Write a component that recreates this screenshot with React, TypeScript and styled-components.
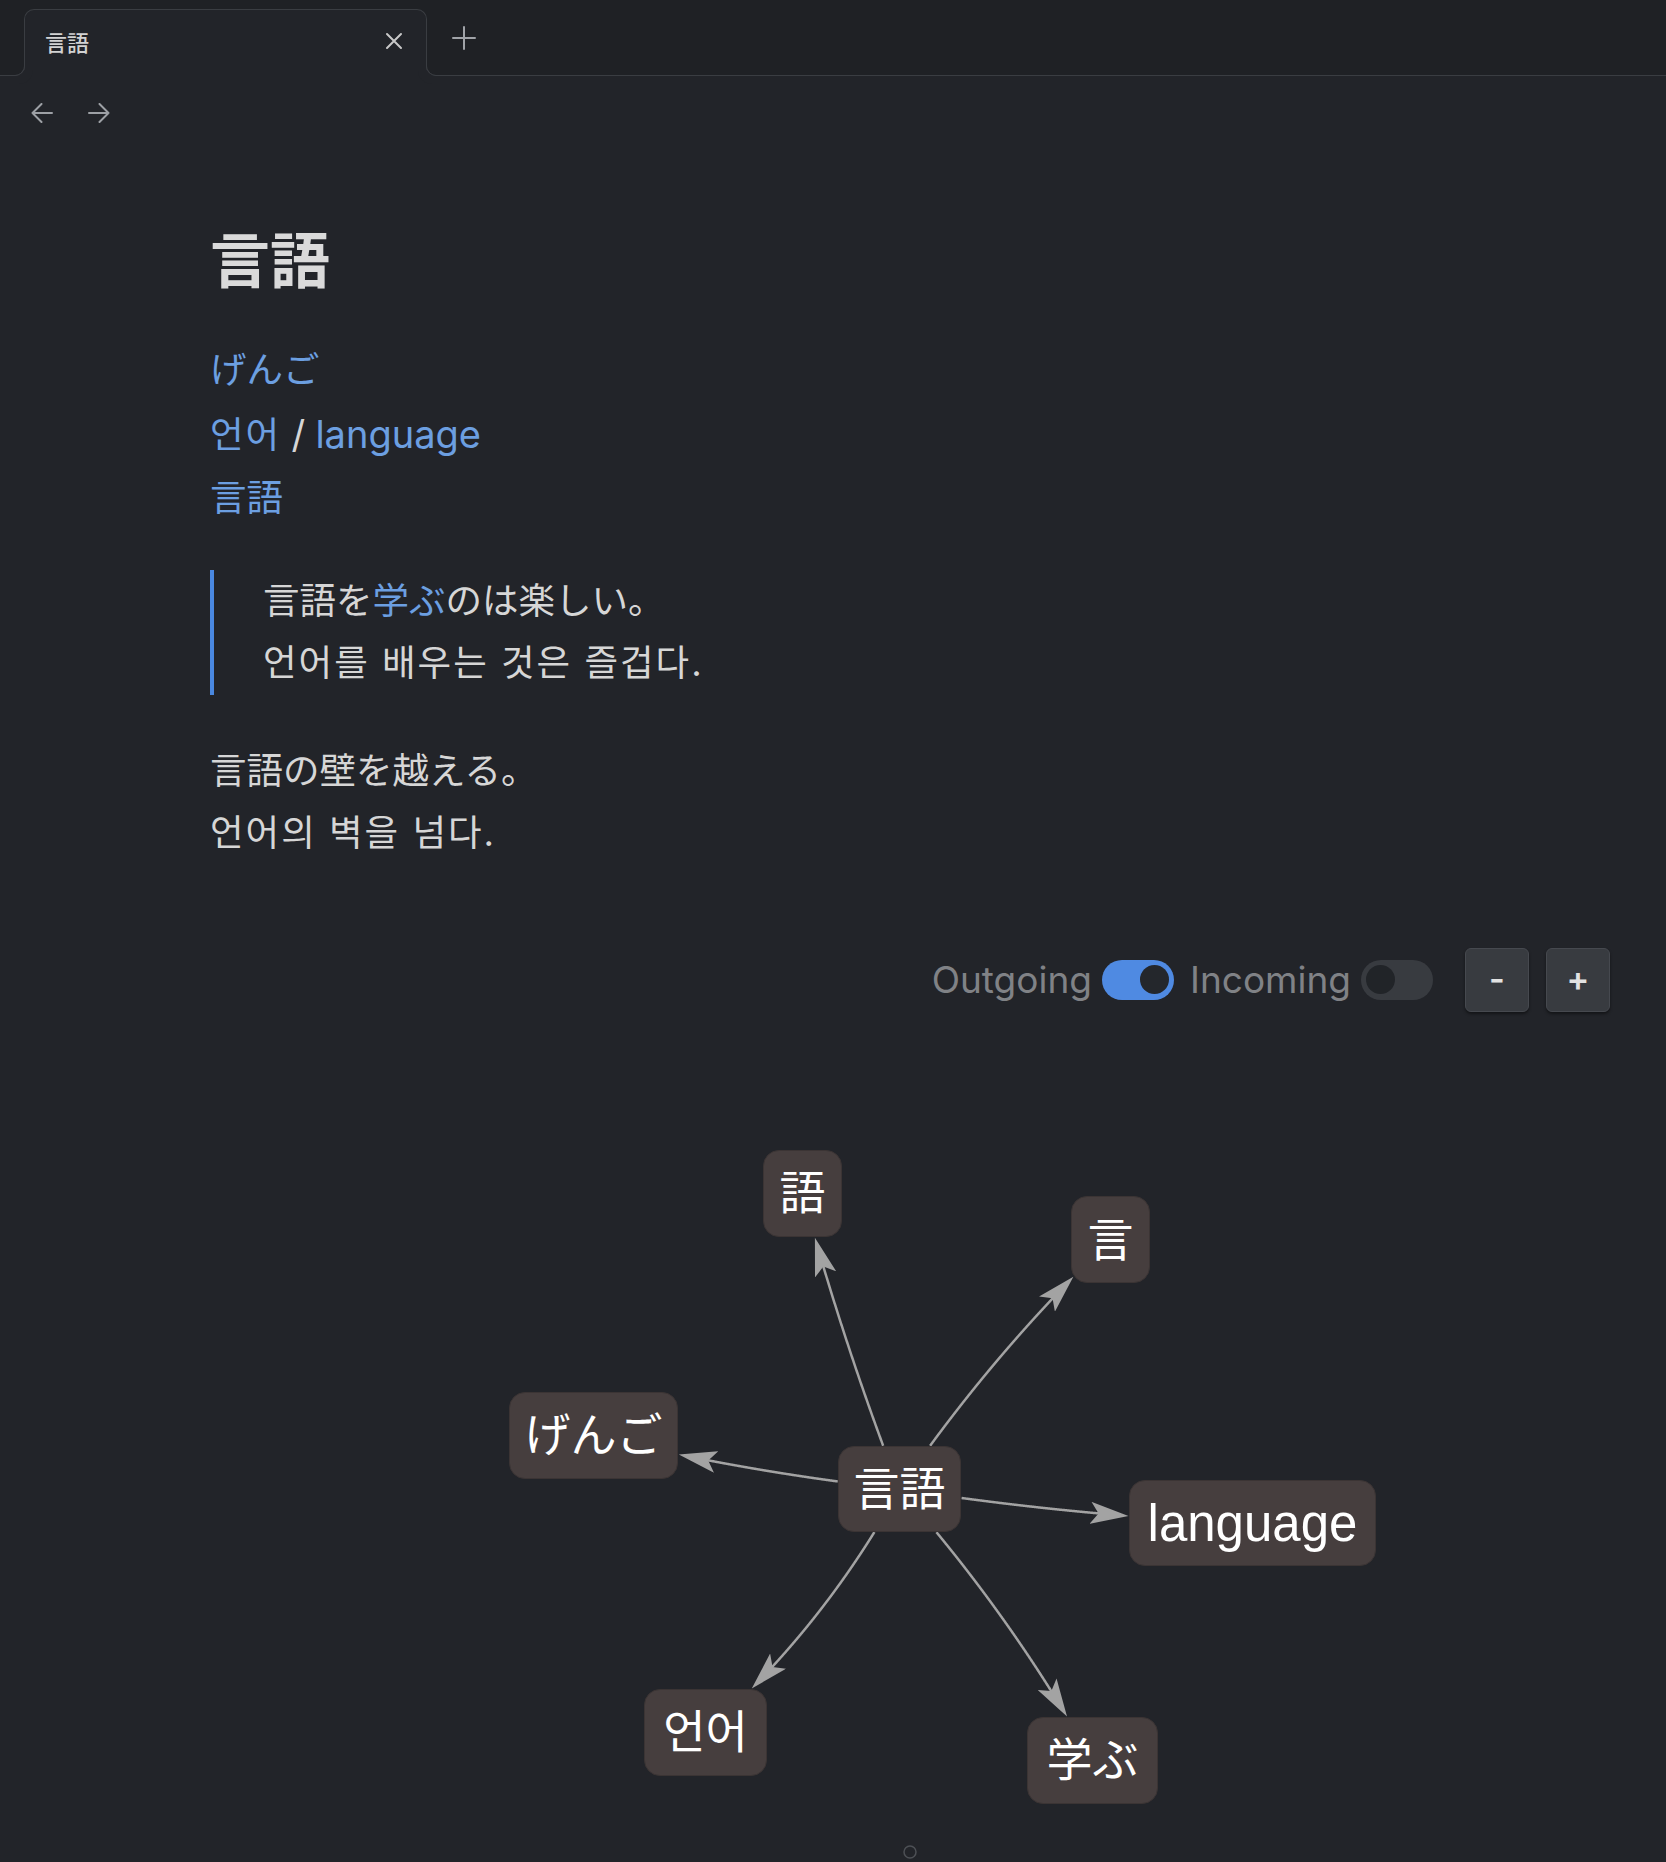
import React from "react";
import styled, { createGlobalStyle } from "styled-components";

const GlobalStyle = createGlobalStyle`
  html, body {
    margin: 0;
    padding: 0;
    height: 100%;
    overflow: hidden;
    background: #222429;
  }
  body {
    font-family: Inter, "Noto Sans CJK JP", sans-serif;
    color: #d6d6d6;
  }
  #root {
    height: 100%;
  }
`;

const LINE = "#3a3d42";
const PAGE_BG = "#222429";
const LINK = "#6c9fe1";
const EDGE = "#a3a3a3";

const Page = styled.div`
  width: 1666px;
  height: 1862px;
  background: ${PAGE_BG};
  display: flex;
  flex-direction: column;
`;

const TabStrip = styled.div`
  display: flex;
  align-items: flex-start;
  height: 66px;
  padding: 9px 0 0 24px;
  background: #1f2125;
  border-bottom: 1px solid ${LINE};
`;

const Tab = styled.div`
  position: relative;
  box-sizing: border-box;
  width: 403px;
  height: 67px;
  display: flex;
  align-items: center;
  justify-content: space-between;
  padding: 0 23px 4px 20px;
  background: ${PAGE_BG};
  border: 1px solid ${LINE};
  border-bottom: none;
  border-radius: 10px 10px 0 0;

  &::before,
  &::after {
    content: "";
    position: absolute;
    bottom: 0;
    width: 10px;
    height: 10px;
    border-bottom: 1px solid ${LINE};
  }
  &::before {
    left: -11px;
    border-right: 1px solid ${LINE};
    border-bottom-right-radius: 10px;
    box-shadow: 4px 4px 0 4px ${PAGE_BG};
  }
  &::after {
    right: -11px;
    border-left: 1px solid ${LINE};
    border-bottom-left-radius: 10px;
    box-shadow: -4px 4px 0 4px ${PAGE_BG};
  }
`;

const TabTitle = styled.span`
  font-family: "Noto Sans CJK JP", sans-serif;
  font-size: 22px;
  font-weight: 500;
  color: #d2d2d2;
`;

const IconButton = styled.span<{ $color?: string }>`
  display: flex;
  align-items: center;
  justify-content: center;
  color: ${(p) => p.$color || "#c8c8c8"};
`;

const NewTab = styled(IconButton)`
  margin: 17px 0 0 25px;
`;

const NavRow = styled.div`
  height: 47px;
  padding: 27px 0 0 31px;
  display: flex;
  align-items: flex-start;
  gap: 35px;
`;

const Main = styled.main`
  padding: 69px 0 0 210px;
`;

const Title = styled.h1`
  margin: 0;
  font-family: "Noto Sans CJK JP", sans-serif;
  font-size: 60px;
  font-weight: 700;
  line-height: 76px;
  color: #dadada;
`;

const Links = styled.div`
  margin-top: 44px;
  font-size: 36.5px;
  line-height: 63.5px;
`;

const Link = styled.a`
  color: ${LINK};
  text-decoration: none;
`;

// Korean runs are set a touch wider than the CJK fallback draws them
const Ko = styled.span`
  letter-spacing: 2px;
`;

const Latin = styled.span`
  font-size: 38px;
`;

const Quote = styled.blockquote`
  margin: 39px 0 0 0;
  padding-left: 49px;
  border-left: 4px solid #4a88e0;
  font-size: 36.5px;
  line-height: 62.5px;
  color: #d6d6d6;
`;

const Paragraph = styled.p`
  margin: 45px 0 0 0;
  font-size: 36.5px;
  line-height: 62.5px;
  color: #d6d6d6;
`;

const Controls = styled.div`
  margin-top: 83px;
  height: 64px;
  padding-right: 56px;
  display: flex;
  align-items: center;
  justify-content: flex-end;
`;

const ToggleLabel = styled.span`
  font-family: Inter, sans-serif;
  font-size: 37px;
  color: #808286;
  margin-right: 10px;
`;

const Toggle = styled.span<{ $on?: boolean }>`
  position: relative;
  width: 72px;
  height: 40px;
  border-radius: 20px;
  background: ${(p) => (p.$on ? "#4f8ae2" : "#383b40")};
  margin-right: ${(p) => (p.$on ? "16px" : "32px")};

  &::after {
    content: "";
    position: absolute;
    top: 5.5px;
    ${(p) => (p.$on ? "right: 5px;" : "left: 5px;")}
    width: 29px;
    height: 29px;
    border-radius: 50%;
    background: ${(p) => (p.$on ? "#24272c" : "#212428")};
  }
`;

const ZoomButton = styled.button<{ $gap?: number }>`
  box-sizing: border-box;
  width: 64px;
  height: 64px;
  margin-left: ${(p) => p.$gap ?? 0}px;
  display: flex;
  align-items: center;
  justify-content: center;
  padding: 0 0 2px 0;
  border: 1px solid #46494f;
  border-radius: 6px;
  background: #383b40;
  box-shadow: 0 2px 3px rgba(0, 0, 0, 0.45);
  font-family: Inter, sans-serif;
  font-size: 34px;
  font-weight: 600;
  color: #e2e2e2;
`;

const Canvas = styled.div`
  position: relative;
  flex: 1;
`;

const Edges = styled.svg`
  position: absolute;
  inset: 0;
  width: 100%;
  height: 100%;
`;

const Node = styled.div<{ $x: number; $y: number; $w: number; $h: number; $size?: number }>`
  position: absolute;
  box-sizing: border-box;
  left: ${(p) => p.$x - p.$w / 2}px;
  top: ${(p) => p.$y - p.$h / 2}px;
  width: ${(p) => p.$w}px;
  height: ${(p) => p.$h}px;
  display: flex;
  align-items: center;
  justify-content: center;
  background: #463e3e;
  border: 1.5px solid #3b3434;
  border-radius: 16px;
  font-family: "Liberation Sans", "Noto Sans CJK JP", sans-serif;
  font-size: ${(p) => p.$size ?? 46}px;
  line-height: 1;
  color: #ffffff;
  white-space: nowrap;
`;

type GNode = {
  id: string;
  label: string;
  x: number;
  y: number;
  w: number;
  h: number;
  size?: number;
  bend?: number;
};

const NODES: GNode[] = [
  { id: "center", label: "言語", x: 899.5, y: 477, w: 123, h: 86 },
  { id: "go", label: "語", x: 802.5, y: 181.5, w: 79, h: 87, bend: -8 },
  { id: "gen", label: "言", x: 1110.5, y: 228, w: 79, h: 87, bend: -17 },
  { id: "gengo", label: "げんご", x: 593.5, y: 423.5, w: 169, h: 87, bend: -10 },
  { id: "language", label: "language", x: 1252.5, y: 511.5, w: 247, h: 86, size: 51, bend: 10 },
  { id: "eoneo", label: "언어", x: 705.5, y: 720.5, w: 123, h: 87, bend: -27 },
  { id: "manabu", label: "学ぶ", x: 1092.5, y: 748.5, w: 131, h: 87, bend: -18 },
];

const RADIUS = 16;

const inside = (n: GNode, x: number, y: number) => {
  const ax = Math.abs(x - n.x);
  const ay = Math.abs(y - n.y);
  if (ax > n.w / 2 || ay > n.h / 2) return false;
  const cx = ax - (n.w / 2 - RADIUS);
  const cy = ay - (n.h / 2 - RADIUS);
  if (cx <= 0 || cy <= 0) return true;
  return cx * cx + cy * cy <= RADIUS * RADIUS;
};

// curved edge from the centre node, clipped at both boxes, ending short of the tip
const edges = NODES.slice(1).map((to) => {
  const from = NODES[0];
  const len = Math.hypot(to.x - from.x, to.y - from.y);
  const dx = (to.x - from.x) / len;
  const dy = (to.y - from.y) / len;
  const bend = to.bend ?? 0;
  const cx = (from.x + to.x) / 2 - dy * bend;
  const cy = (from.y + to.y) / 2 + dx * bend;
  const pts: [number, number][] = [];
  const steps = 600;
  for (let i = 0; i <= steps; i++) {
    const t = i / steps;
    const u = 1 - t;
    const x = u * u * from.x + 2 * u * t * cx + t * t * to.x;
    const y = u * u * from.y + 2 * u * t * cy + t * t * to.y;
    if (inside(from, x, y)) continue;
    if (inside(to, x, y)) break;
    pts.push([x, y]);
  }
  const tip = pts[pts.length - 1];
  while (pts.length > 2) {
    const p = pts[pts.length - 1];
    if (Math.hypot(tip[0] - p[0], tip[1] - p[1]) >= 10) break;
    pts.pop();
  }
  return { id: to.id, points: pts.map((p) => p.join(",")).join(" ") };
});

const ArrowLeft = () => (
  <svg width="22" height="20" viewBox="0 0 22 20" fill="none" stroke="#9da0a5" strokeWidth="2" strokeLinecap="round" strokeLinejoin="round">
    <path d="M10.5 1 L1.5 10 L10.5 19 M1.5 10 H21" />
  </svg>
);

const ArrowRight = () => (
  <svg width="22" height="20" viewBox="0 0 22 20" fill="none" stroke="#9da0a5" strokeWidth="2" strokeLinecap="round" strokeLinejoin="round">
    <path d="M11.5 1 L20.5 10 L11.5 19 M20.5 10 H1" />
  </svg>
);

export default function App() {
  return (
    <>
      <GlobalStyle />
      <Page>
        <TabStrip>
          <Tab>
            <TabTitle>言語</TabTitle>
            <IconButton>
              <svg width="18" height="18" viewBox="0 0 18 18" stroke="currentColor" strokeWidth="2" strokeLinecap="round">
                <path d="M2 2 L16 16 M16 2 L2 16" />
              </svg>
            </IconButton>
          </Tab>
          <NewTab $color="#a0a3a8">
            <svg width="24" height="24" viewBox="0 0 24 24" stroke="currentColor" strokeWidth="2" strokeLinecap="round">
              <path d="M12 1 V23 M1 12 H23" />
            </svg>
          </NewTab>
        </TabStrip>

        <NavRow>
          <ArrowLeft />
          <ArrowRight />
        </NavRow>

        <Main>
          <Title>言語</Title>
          <Links>
            <Link href="#">げんご</Link>
            <br />
            <Link href="#">
              <Ko>언어</Ko>
            </Link>{" "}
            <Latin>/</Latin>{" "}
            <Link href="#">
              <Latin>language</Latin>
            </Link>
            <br />
            <Link href="#">言語</Link>
          </Links>
          <Quote>
            言語を<Link href="#">学ぶ</Link>のは楽しい。
            <br />
            <Ko>언어를 배우는 것은 즐겁다.</Ko>
          </Quote>
          <Paragraph>
            言語の壁を越える。
            <br />
            <Ko>언어의 벽을 넘다.</Ko>
          </Paragraph>
        </Main>

        <Controls>
          <ToggleLabel>Outgoing</ToggleLabel>
          <Toggle $on />
          <ToggleLabel>Incoming</ToggleLabel>
          <Toggle />
          <ZoomButton>-</ZoomButton>
          <ZoomButton $gap={17}>+</ZoomButton>
        </Controls>

        <Canvas>
          <Edges>
            <defs>
              <marker
                id="arrow"
                markerUnits="userSpaceOnUse"
                markerWidth="40"
                markerHeight="22"
                refX="28"
                refY="11"
                orient="auto"
              >
                <path d="M0,0 L38,11 L0,22 L8,11 Z" fill={EDGE} />
              </marker>
            </defs>
            {edges.map((e) => (
              <polyline
                key={e.id}
                points={e.points}
                fill="none"
                stroke={EDGE}
                strokeWidth="2.5"
                markerEnd="url(#arrow)"
              />
            ))}
            <circle cx="910" cy="840" r="6" fill="none" stroke="#4d5055" strokeWidth="1.5" />
          </Edges>
          {NODES.map((n) => (
            <Node key={n.id} $x={n.x} $y={n.y} $w={n.w} $h={n.h} $size={n.size}>
              {n.label}
            </Node>
          ))}
        </Canvas>
      </Page>
    </>
  );
}
